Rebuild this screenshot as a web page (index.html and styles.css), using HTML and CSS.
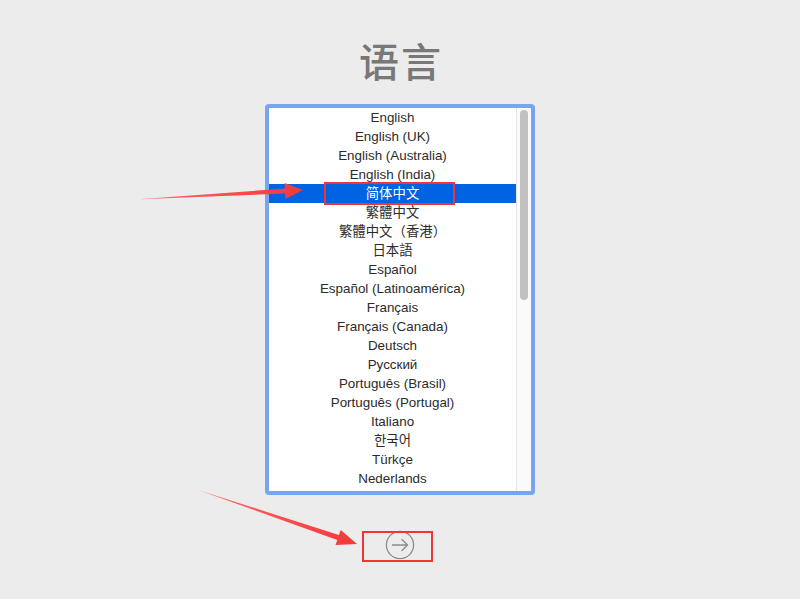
FILE: index.html
```html
<!DOCTYPE html>
<html lang="zh-CN">
<head>
    <meta charset="UTF-8">
    <meta name="viewport" content="width=device-width, initial-scale=1.0">
    <title>语言</title>
    <link rel="stylesheet" href="styles.css">
</head>
<body>
    <main class="installer">
        <h1 class="title">语言</h1>

        <div class="listbox">
            <ul class="lang-list">
                <li>English</li>
                <li>English (UK)</li>
                <li>English (Australia)</li>
                <li>English (India)</li>
                <li class="selected">简体中文</li>
                <li>繁體中文</li>
                <li>繁體中文（香港）</li>
                <li>日本語</li>
                <li>Español</li>
                <li>Español (Latinoamérica)</li>
                <li>Français</li>
                <li>Français (Canada)</li>
                <li>Deutsch</li>
                <li>Русский</li>
                <li>Português (Brasil)</li>
                <li>Português (Portugal)</li>
                <li>Italiano</li>
                <li>한국어</li>
                <li>Türkçe</li>
                <li>Nederlands</li>
            </ul>
            <div class="scroll-track">
                <div class="scroll-thumb"></div>
            </div>
        </div>

        <button class="next-btn" type="button" aria-label="继续">
            <svg width="30" height="30" viewBox="0 0 30 30">
                <circle cx="15" cy="15" r="13.6" fill="none" stroke="#8b8b8b" stroke-width="1.3"/>
                <path d="M7.5 15 H22.5 M17 9.5 L22.5 15 L17 20.5" fill="none" stroke="#8b8b8b" stroke-width="1.4" stroke-linecap="round" stroke-linejoin="round"/>
            </svg>
        </button>
    </main>

    <!-- red callouts drawn on top of the window -->
    <svg class="marks" width="800" height="599" viewBox="0 0 800 599">
        <defs>
            <linearGradient id="fadeA" x1="140" y1="0" x2="303" y2="0" gradientUnits="userSpaceOnUse">
                <stop offset="0" stop-color="#f66"/>
                <stop offset="1" stop-color="#f23a3a"/>
            </linearGradient>
            <linearGradient id="fadeB" x1="200" y1="490" x2="357" y2="544" gradientUnits="userSpaceOnUse">
                <stop offset="0" stop-color="#f66"/>
                <stop offset="1" stop-color="#f23a3a"/>
            </linearGradient>
        </defs>
        <polygon points="139,199.3 284.9,188.5 284.6,183 303,190 285.4,199 285.1,193.5" fill="url(#fadeA)"/>
        <polygon points="199.6,490.4 338.9,535.1 340.7,529.9 357,544 335.5,545.1 337.3,539.9" fill="url(#fadeB)"/>
        <rect x="325" y="183" width="129" height="21" fill="none" stroke="#ef3535" stroke-width="2"/>
        <rect x="363" y="532" width="69" height="29" fill="none" stroke="#ef3535" stroke-width="2"/>
    </svg>
</body>
</html>
```

FILE: styles.css
```css
body {
    margin: 0;
    height: 599px;
    background-color: #ececec;
    font-family: "Liberation Sans", "Noto Sans CJK SC", sans-serif;
    overflow: hidden;
    position: relative;
}

.installer {
    display: flex;
    flex-direction: column;
    align-items: center;
    padding-top: 40px;
}

.title {
    margin: 0;
    font-family: "Noto Sans CJK SC", sans-serif;
    font-size: 40px;
    line-height: 40px;
    font-weight: 500;
    color: #787878;
    letter-spacing: 2px;
    padding-left: 2px;
}

/* Language picker */
.listbox {
    margin-top: 24px;
    width: 262px;
    height: 383px;
    border: 4px solid #78a5ef;
    border-radius: 4px;
    background: #ffffff;
    display: grid;
    grid-template-columns: 1fr 15px;
    overflow: hidden;
}

.lang-list {
    list-style: none;
    margin: 0;
    padding: 0;
    overflow: hidden;
}

.lang-list li {
    height: 19px;
    line-height: 19px;
    text-align: center;
    font-size: 13.4px;
    color: #2b2b2b;
    white-space: nowrap;
}

.lang-list li.selected {
    background: #0063e1;
    color: #ffffff;
}

.scroll-track {
    border-left: 1px solid #e6e6e6;
    background: #fafafa;
    padding: 2px 3px 0 3px;
}

.scroll-thumb {
    width: 8px;
    height: 190px;
    border-radius: 4px;
    background: #c1c1c1;
}

/* Continue arrow */
.next-btn {
    margin-top: 35px;
    width: 30px;
    height: 30px;
    padding: 0;
    border: none;
    background: none;
    cursor: pointer;
}

.next-btn svg {
    display: block;
}

.marks {
    position: absolute;
    top: 0;
    left: 0;
    pointer-events: none;
}
```
